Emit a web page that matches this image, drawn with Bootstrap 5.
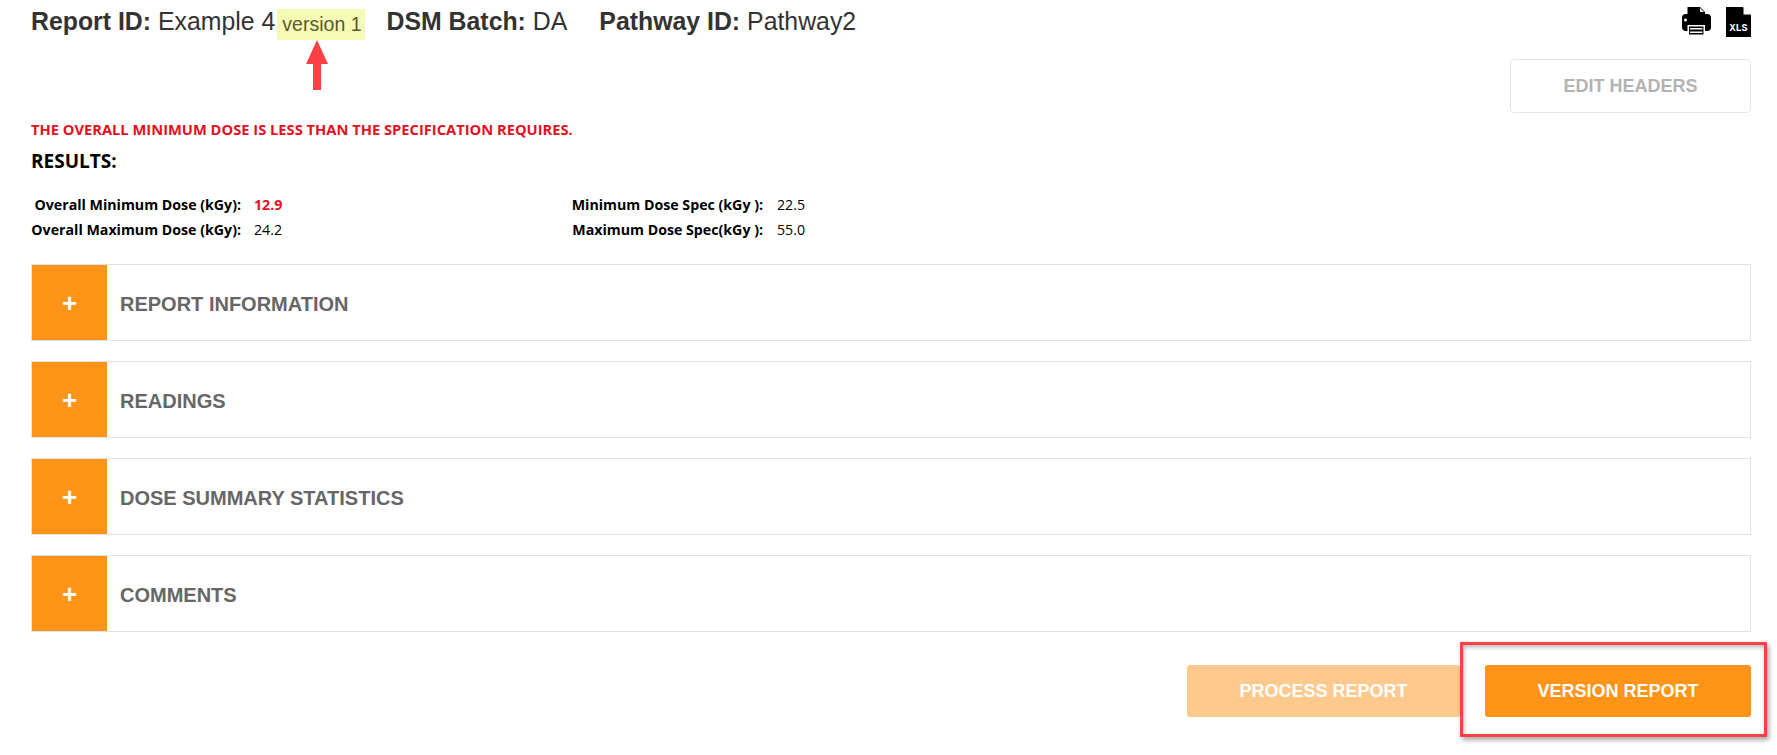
<!DOCTYPE html>
<html lang="en">
<head>
    <meta charset="UTF-8">
    <meta name="viewport" content="width=device-width, initial-scale=1.0">
    <title>Report</title>
    <link href="https://cdn.jsdelivr.net/npm/bootstrap@5.3.2/dist/css/bootstrap.min.css" rel="stylesheet">
    <style>
        body { font-family: "Liberation Sans", Arial, sans-serif; color: #333; background: #fff; }
        .report-page { position: relative; height: 755px; padding: 0 26px 0 31px; overflow: hidden; }
        .report-top { height: 45px; padding-top: 6px; }
        .report-title { font-size: 24.85px; line-height: 32px; color: #333; margin: 0; white-space: nowrap; }
        .version-tag { display: inline-block; background: #f5fbb5; color: #5a5a2e; font-size: 19.5px; line-height: 31px; padding: 0 4px 0 5px; margin: 3px 21px 0 2px; vertical-align: top; }
        .gap-title { margin-left: 32px; }
        .top-icons { gap: 15px; padding-top: 1px; }
        .edit-btn { width: 241px; height: 54px; border: 1px solid #e6e6e6; border-radius: 4px; background: #fff; color: #b3b3b3; font-size: 18px; font-weight: 700; padding: 0; }
        .edit-row { height: 67px; padding-top: 14px; }
        .spec-warn { font-family: "Open Sans", sans-serif; font-size: 14.7px; font-weight: 700; color: #e3101e; line-height: 20px; margin: 7px 0 0; }
        .results-head { font-family: "Open Sans", sans-serif; font-size: 19px; font-weight: 700; color: #000; line-height: 24px; margin: 10px 0 0; }
        .dose-grid { display: grid; grid-template-columns: 210px 32px 275px 215px 40px; grid-auto-rows: 25px; margin: 19px 0 0; font-family: "Open Sans", sans-serif; font-size: 14.2px; line-height: 25px; color: #000; }
        .dose-label { font-weight: 700; text-align: right; white-space: nowrap; }
        .dose-val { padding-left: 13px; }
        .dose-val-spec { padding-left: 14px; }
        .dose-val-red { color: #e3101e; font-weight: 700; }
        .panel-stack { margin-top: 22px; gap: 20px; }
        .report-panel { height: 77px; border: 1px solid #e2e2e2; background: #fff; }
        .panel-plus { width: 75px; background: #ff9419; color: #fff; font-size: 26px; font-weight: 700; line-height: 1; }
        .panel-name { padding: 2px 0 0 13px; font-size: 20px; font-weight: 700; color: #666; }
        .foot-row { margin-top: 33px; }
        .foot-btn { height: 52px; border: 0; border-radius: 3px; color: #fff; font-size: 18px; font-weight: 700; padding: 0; }
        .foot-process { width: 273px; background: #fec98c; margin-right: 25px; }
        .foot-version { width: 266px; background: #ff9419; }
        .mark-arrow { position: absolute; left: 306px; top: 40px; }
        .mark-box { position: absolute; left: 1460px; top: 642px; width: 307px; height: 95px; border: 3px solid #fb4146; box-shadow: 2px 3px 5px rgba(0,0,0,.35), inset 1px 2px 4px rgba(0,0,0,.3); }
    </style>
</head>
<body>
    <div class="report-page">
        <div class="report-top d-flex justify-content-between">
            <h1 class="report-title fw-normal">
                <b>Report ID:</b> Example 4<span class="version-tag">version 1</span><b>DSM Batch:</b> DA<b class="gap-title">Pathway ID:</b> Pathway2
            </h1>
            <div class="top-icons d-flex align-items-start">
                <svg width="29" height="29" viewBox="0 0 29 29">
                    <path d="M5.500 0H18l5 5v4H5.500z" fill="#000"/>
                    <path d="M18 1v4h4z" fill="#fff"/>
                    <rect x="0" y="7" width="29" height="17" rx="4" fill="#000"/>
                    <circle cx="3.500" cy="13" r="1.500" fill="#fff"/>
                    <rect x="5.500" y="18" width="17.500" height="11" fill="#fff"/>
                    <rect x="7" y="19.500" width="14.500" height="8" fill="#000"/>
                    <rect x="8" y="21" width="12.500" height="1.500" fill="#fff"/>
                    <rect x="8" y="24.500" width="12.500" height="1.500" fill="#fff"/>
                </svg>
                <svg width="25" height="30" viewBox="0 0 25 30">
                    <path d="M0 0h17l8 8v22H0z" fill="#000"/>
                    <path d="M17.500 0l7.500 7.500h-7.500z" fill="#fff"/>
                    <text x="12.500" y="24" text-anchor="middle" font-family="Liberation Mono, monospace" font-size="10" font-weight="700" fill="#fff">XLS</text>
                </svg>
            </div>
        </div>
        <div class="edit-row d-flex justify-content-end">
            <button class="edit-btn" type="button">EDIT HEADERS</button>
        </div>
        <p class="spec-warn">THE OVERALL MINIMUM DOSE IS LESS THAN THE SPECIFICATION REQUIRES.</p>
        <p class="results-head">RESULTS:</p>
        <div class="dose-grid">
            <div class="dose-label">Overall Minimum Dose (kGy):</div>
            <div class="dose-val dose-val-red">12.9</div>
            <div></div>
            <div class="dose-label">Minimum Dose Spec (kGy ):</div>
            <div class="dose-val dose-val-spec">22.5</div>
            <div class="dose-label">Overall Maximum Dose (kGy):</div>
            <div class="dose-val">24.2</div>
            <div></div>
            <div class="dose-label">Maximum Dose Spec(kGy ):</div>
            <div class="dose-val dose-val-spec">55.0</div>
        </div>
        <div class="panel-stack d-flex flex-column">
            <div class="report-panel d-flex">
                <div class="panel-plus d-flex align-items-center justify-content-center">+</div>
                <div class="panel-name d-flex align-items-center">REPORT INFORMATION</div>
            </div>
            <div class="report-panel d-flex">
                <div class="panel-plus d-flex align-items-center justify-content-center">+</div>
                <div class="panel-name d-flex align-items-center">READINGS</div>
            </div>
            <div class="report-panel d-flex">
                <div class="panel-plus d-flex align-items-center justify-content-center">+</div>
                <div class="panel-name d-flex align-items-center">DOSE SUMMARY STATISTICS</div>
            </div>
            <div class="report-panel d-flex">
                <div class="panel-plus d-flex align-items-center justify-content-center">+</div>
                <div class="panel-name d-flex align-items-center">COMMENTS</div>
            </div>
        </div>
        <div class="foot-row d-flex justify-content-end">
            <button class="foot-btn foot-process" type="button">PROCESS REPORT</button>
            <button class="foot-btn foot-version" type="button">VERSION REPORT</button>
        </div>
        <svg class="mark-arrow" width="22" height="50" viewBox="0 0 22 50">
            <path d="M11 0L22 24H15V50H7V24H0z" fill="#fb4146"/>
        </svg>
        <div class="mark-box"></div>
    </div>
    <script src="https://cdn.jsdelivr.net/npm/bootstrap@5.3.2/dist/js/bootstrap.bundle.min.js"></script>
</body>
</html>
